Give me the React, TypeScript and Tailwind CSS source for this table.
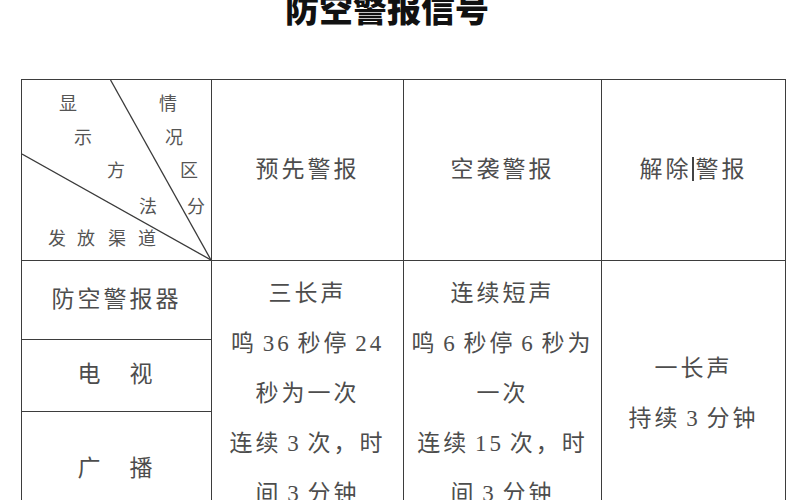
import React from "react";

const cornerChars = [
  { ch: "显", cls: "left-[37px] top-[13px]" },
  { ch: "情", cls: "left-[137px] top-[13px]" },
  { ch: "示", cls: "left-[52px] top-[47px]" },
  { ch: "况", cls: "left-[143px] top-[47px]" },
  { ch: "方", cls: "left-[85px] top-[80px]" },
  { ch: "区", cls: "left-[158px] top-[80px]" },
  { ch: "法", cls: "left-[117px] top-[116px]" },
  { ch: "分", cls: "left-[165px] top-[116px]" },
  { ch: "发", cls: "left-[26px] top-[148px]" },
  { ch: "放", cls: "left-[55px] top-[148px]" },
  { ch: "渠", cls: "left-[86px] top-[148px]" },
  { ch: "道", cls: "left-[116px] top-[148px]" },
];

const cellFont = "font-['Liberation_Serif','Noto_Sans_CJK_SC',serif]";

function CornerCell() {
  return (
    <td className="border border-[#3d3d3d] p-0 align-top">
      <div className="relative h-[180px] w-full">
        <svg className="absolute inset-0 h-full w-full" viewBox="0 0 190 180" preserveAspectRatio="none">
          <line x1="89" y1="0" x2="190" y2="180" stroke="#3a3a3a" strokeWidth="1.3" />
          <line x1="0" y1="74" x2="190" y2="180" stroke="#3a3a3a" strokeWidth="1.3" />
        </svg>
        {cornerChars.map((c) => (
          <span
            key={c.ch}
            className={`absolute ${c.cls} w-[18px] text-center text-[18px] leading-[18px] text-[#555] font-['Noto_Sans_CJK_SC',sans-serif]`}
          >
            {c.ch}
          </span>
        ))}
      </div>
    </td>
  );
}

function Lines({ lines }: { lines: string[] }) {
  return (
    <div className="flex flex-col items-center [word-spacing:-3px]">
      {lines.map((l, i) => (
        <div key={i} className="leading-[50px] whitespace-pre">
          {l}
        </div>
      ))}
    </div>
  );
}

export default function App() {
  return (
    <div className="w-[800px] h-[500px] overflow-hidden bg-white">
      <div className="flex justify-center pr-[26px] -mt-[9px]">
        <h1 className="text-[34px] leading-[34px] font-black text-[#111] font-['Noto_Sans_CJK_SC',sans-serif]">
          防空警报信号
        </h1>
      </div>

      <table
        className={`ml-[21px] mt-[54px] w-[764px] table-fixed border-collapse text-[23px] tracking-[3px] text-[#4d4d4d] ${cellFont}`}
      >
        <colgroup>
          <col className="w-[190px]" />
          <col className="w-[192px]" />
          <col className="w-[198px]" />
          <col className="w-[184px]" />
        </colgroup>
        <tbody>
          <tr className="h-[180px]">
            <CornerCell />
            <td className="border border-[#3d3d3d] text-center align-middle">预先警报</td>
            <td className="border border-[#3d3d3d] text-center align-middle">空袭警报</td>
            <td className="border border-[#3d3d3d] text-center align-middle">
              解除<span className="inline-block w-[2px] h-[24px] bg-[#444] align-[-4px] mr-[2px]" />警报
            </td>
          </tr>
          <tr className="h-[79px]">
            <td className="border border-[#3d3d3d] text-center align-middle">防空警报器</td>
            <td rowSpan={3} className="border border-[#3d3d3d] text-center align-middle">
              <Lines lines={["三长声", "鸣 36 秒停 24", "秒为一次", "连续 3 次，时", "间 3 分钟"]} />
            </td>
            <td rowSpan={3} className="border border-[#3d3d3d] text-center align-middle">
              <Lines lines={["连续短声", "鸣 6 秒停 6 秒为", "一次", "连续 15 次，时", "间 3 分钟"]} />
            </td>
            <td rowSpan={3} className="border border-[#3d3d3d] text-center align-middle">
              <Lines lines={["一长声", "持续 3 分钟"]} />
            </td>
          </tr>
          <tr className="h-[72px]">
            <td className="border border-[#3d3d3d] text-center align-middle">电　视</td>
          </tr>
          <tr className="h-[115px]">
            <td className="border border-[#3d3d3d] text-center align-middle">广　播</td>
          </tr>
        </tbody>
      </table>
    </div>
  );
}
